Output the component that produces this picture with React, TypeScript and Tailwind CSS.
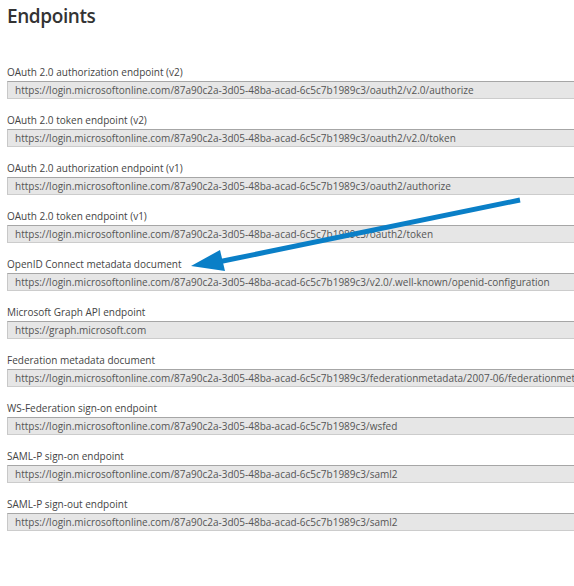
const endpoints: { label: string; url: string }[] = [
  {
    label: "OAuth 2.0 authorization endpoint (v2)",
    url: "https://login.microsoftonline.com/87a90c2a-3d05-48ba-acad-6c5c7b1989c3/oauth2/v2.0/authorize",
  },
  {
    label: "OAuth 2.0 token endpoint (v2)",
    url: "https://login.microsoftonline.com/87a90c2a-3d05-48ba-acad-6c5c7b1989c3/oauth2/v2.0/token",
  },
  {
    label: "OAuth 2.0 authorization endpoint (v1)",
    url: "https://login.microsoftonline.com/87a90c2a-3d05-48ba-acad-6c5c7b1989c3/oauth2/authorize",
  },
  {
    label: "OAuth 2.0 token endpoint (v1)",
    url: "https://login.microsoftonline.com/87a90c2a-3d05-48ba-acad-6c5c7b1989c3/oauth2/token",
  },
  {
    label: "OpenID Connect metadata document",
    url: "https://login.microsoftonline.com/87a90c2a-3d05-48ba-acad-6c5c7b1989c3/v2.0/.well-known/openid-configuration",
  },
  { label: "Microsoft Graph API endpoint", url: "https://graph.microsoft.com" },
  {
    label: "Federation metadata document",
    url: "https://login.microsoftonline.com/87a90c2a-3d05-48ba-acad-6c5c7b1989c3/federationmetadata/2007-06/federationmetadata.xml",
  },
  {
    label: "WS-Federation sign-on endpoint",
    url: "https://login.microsoftonline.com/87a90c2a-3d05-48ba-acad-6c5c7b1989c3/wsfed",
  },
  {
    label: "SAML-P sign-on endpoint",
    url: "https://login.microsoftonline.com/87a90c2a-3d05-48ba-acad-6c5c7b1989c3/saml2",
  },
  {
    label: "SAML-P sign-out endpoint",
    url: "https://login.microsoftonline.com/87a90c2a-3d05-48ba-acad-6c5c7b1989c3/saml2",
  },
];

const EndpointRow = ({ label, url }: { label: string; url: string }) => (
  <div className="mb-[13px]">
    <div className="h-[16px] leading-[16px] text-[10px] text-[#444444]">{label}</div>
    <div className="mt-[1px] h-[18px] w-[640px] border-t border-b border-t-[#a6a6a6] border-b-[#cccccc] border-l border-l-[#c8c8c8] bg-[#e6e6e6] pl-[7px] leading-[16px] text-[10px] text-[#555555] whitespace-nowrap overflow-hidden">
      {url}
    </div>
  </div>
);

const App = () => {
  return (
    <div
      className="relative h-[586px] w-[574px] overflow-hidden bg-white pl-[7px]"
      style={{ fontFamily: '"Open Sans", "Noto Sans", sans-serif' }}
    >
      <h1 className="h-[64px] pt-[2px] text-[19px] leading-[28px] tracking-[-0.4px] font-semibold text-[#333333]">
        Endpoints
      </h1>
      {endpoints.map((e) => (
        <EndpointRow key={e.label} label={e.label} url={e.url} />
      ))}

      {/* annotation arrow */}
      <svg className="absolute left-0 top-0" width="574" height="586" viewBox="0 0 574 586">
        <line x1="520" y1="200" x2="218" y2="262" stroke="#0a7fc7" strokeWidth="5" />
        <polygon points="191,266 220,250 225,271" fill="#0a7fc7" />
      </svg>
    </div>
  );
};

export default App;
